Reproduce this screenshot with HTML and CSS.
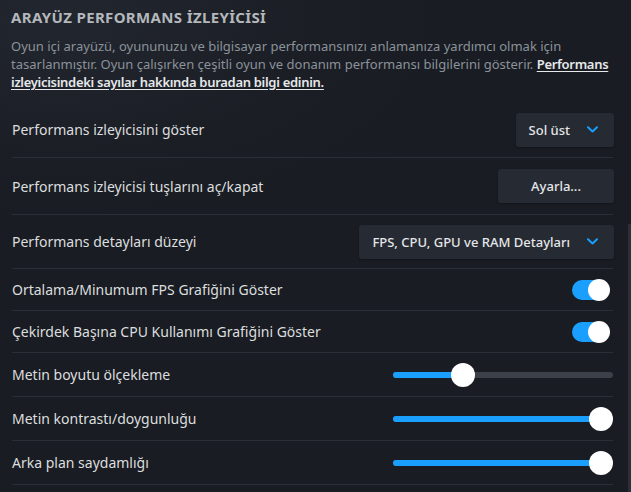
FILE: index.html
```html
<!DOCTYPE html>
<html lang="tr">
<head>
<meta charset="utf-8">
<link rel="stylesheet" href="styles.css">
</head>
<body>
<div class="page">
  <h1 class="title">Arayüz Performans İzleyicisi</h1>
  <p class="desc">Oyun içi arayüzü, oyununuzu ve bilgisayar performansınızı anlamanıza yardımcı olmak için tasarlanmıştır. Oyun çalışırken çeşitli oyun ve donanım performansı bilgilerini gösterir. <a class="link" href="#">Performans izleyicisindeki sayılar hakkında buradan bilgi edinin.</a></p>

  <div class="rows">
  <div class="row row-btn">
    <span class="label">Performans izleyicisini göster</span>
    <button class="btn btn-drop">Sol üst <svg class="chev" width="11" height="7" viewBox="0 0 11 7"><path d="M1 1.2 L5.5 5.4 L10 1.2" fill="none" stroke="#1a9fff" stroke-width="2" stroke-linecap="round" stroke-linejoin="round"/></svg></button>
  </div>
  <div class="row row-btn row-2">
    <span class="label">Performans izleyicisi tuşlarını aç/kapat</span>
    <button class="btn btn-plain">Ayarla...</button>
  </div>
  <div class="row row-btn row-3">
    <span class="label">Performans detayları düzeyi</span>
    <button class="btn btn-drop">FPS, CPU, GPU ve RAM Detayları <svg class="chev" width="11" height="7" viewBox="0 0 11 7"><path d="M1 1.2 L5.5 5.4 L10 1.2" fill="none" stroke="#1a9fff" stroke-width="2" stroke-linecap="round" stroke-linejoin="round"/></svg></button>
  </div>
  <div class="row row-toggle">
    <span class="label">Ortalama/Minumum FPS Grafiğini Göster</span>
    <span class="toggle"><span class="knob"></span></span>
  </div>
  <div class="row row-toggle">
    <span class="label">Çekirdek Başına CPU Kullanımı Grafiğini Göster</span>
    <span class="toggle"><span class="knob"></span></span>
  </div>
  <div class="row row-slider">
    <span class="label">Metin boyutu ölçekleme</span>
    <span class="slider"><span class="fill" style="width:32%"></span><span class="thumb"></span></span>
  </div>
  <div class="row row-slider">
    <span class="label">Metin kontrastı/doygunluğu</span>
    <span class="slider"><span class="fill full"></span><span class="thumb"></span></span>
  </div>
  <div class="row row-slider">
    <span class="label">Arka plan saydamlığı</span>
    <span class="slider"><span class="fill full"></span><span class="thumb"></span></span>
  </div>
  </div>
</div>
<div class="scrollbar"></div>
</body>
</html>
```

FILE: styles.css
```css
html, body {
  margin: 0;
  padding: 0;
  height: 100%;
  overflow: hidden;
}
body {
  background: radial-gradient(ellipse 420px 220px at 60px 20px, #22262e 0%, #1b1e25 60%, #191c22 100%);
  background-color: #191c22;
  font-family: "Noto Sans", "Open Sans", "DejaVu Sans", sans-serif;
  color: #dcdedf;
}
.page {
  padding: 7px 18px 0 11px;
}
.title {
  margin: 0;
  font-size: 15px;
  font-weight: 700;
  text-transform: uppercase;
  letter-spacing: 0.35px;
  color: #b4b8bc;
  line-height: 20px;
}
.desc {
  margin: 10px 0 0 0;
  font-size: 13px;
  line-height: 18px;
  color: #8b929a;
}
.link {
  color: #e6e8ea;
  font-weight: 600;
  letter-spacing: -0.3px;
  text-decoration: underline;
  text-underline-offset: 2px;
}
.rows {
  margin-top: 11px;
}
.row {
  display: flex;
  align-items: center;
  justify-content: space-between;
  border-bottom: 1px solid #2a2e36;
  box-sizing: border-box;
  margin-left: 1px;
}
.row-btn { height: 56px; }
.row-2 { height: 57px; }
.row-3 { height: 54px; }
.row-toggle { height: 42px; }
.row-slider { height: 44px; }
.label {
  font-size: 14px;
  color: #dcdedf;
}
.btn {
  font-family: inherit;
  font-size: 13px;
  font-weight: 500;
  color: #e4e6e8;
  background: #262a32;
  border: none;
  border-radius: 3px;
  height: 34px;
  display: flex;
  align-items: center;
  margin-right: -1px;
  box-shadow: 0 1px 2px rgba(0,0,0,0.25);
}
.btn-drop {
  padding: 0 16px 0 13px;
  gap: 17px;
}
.btn-plain {
  width: 116px;
  justify-content: center;
}
.chev { display: block; }
.toggle {
  position: relative;
  width: 38px;
  height: 22px;
  margin-right: 3px;
}
.toggle::before {
  content: "";
  position: absolute;
  left: 0;
  top: 1px;
  width: 34px;
  height: 20px;
  border-radius: 10px;
  background: #1a9fff;
}
.knob {
  position: absolute;
  right: 0;
  top: 0;
  width: 22px;
  height: 22px;
  border-radius: 50%;
  background: #ffffff;
}
.slider {
  width: 220px;
  height: 6px;
  border-radius: 3px;
  background: #3b4049;
  display: flex;
}
.fill {
  display: block;
  height: 100%;
  border-radius: 3px;
  background: #1a9fff;
}
.fill.full {
  width: calc(100% - 12px);
}
.thumb {
  width: 24px;
  height: 24px;
  border-radius: 50%;
  background: #ffffff;
  margin: -9px 0 0 -12px;
  flex: none;
}
.scrollbar {
  position: fixed;
  right: 0;
  top: 224px;
  bottom: 0;
  width: 3px;
  background: #2b3038;
}
```
